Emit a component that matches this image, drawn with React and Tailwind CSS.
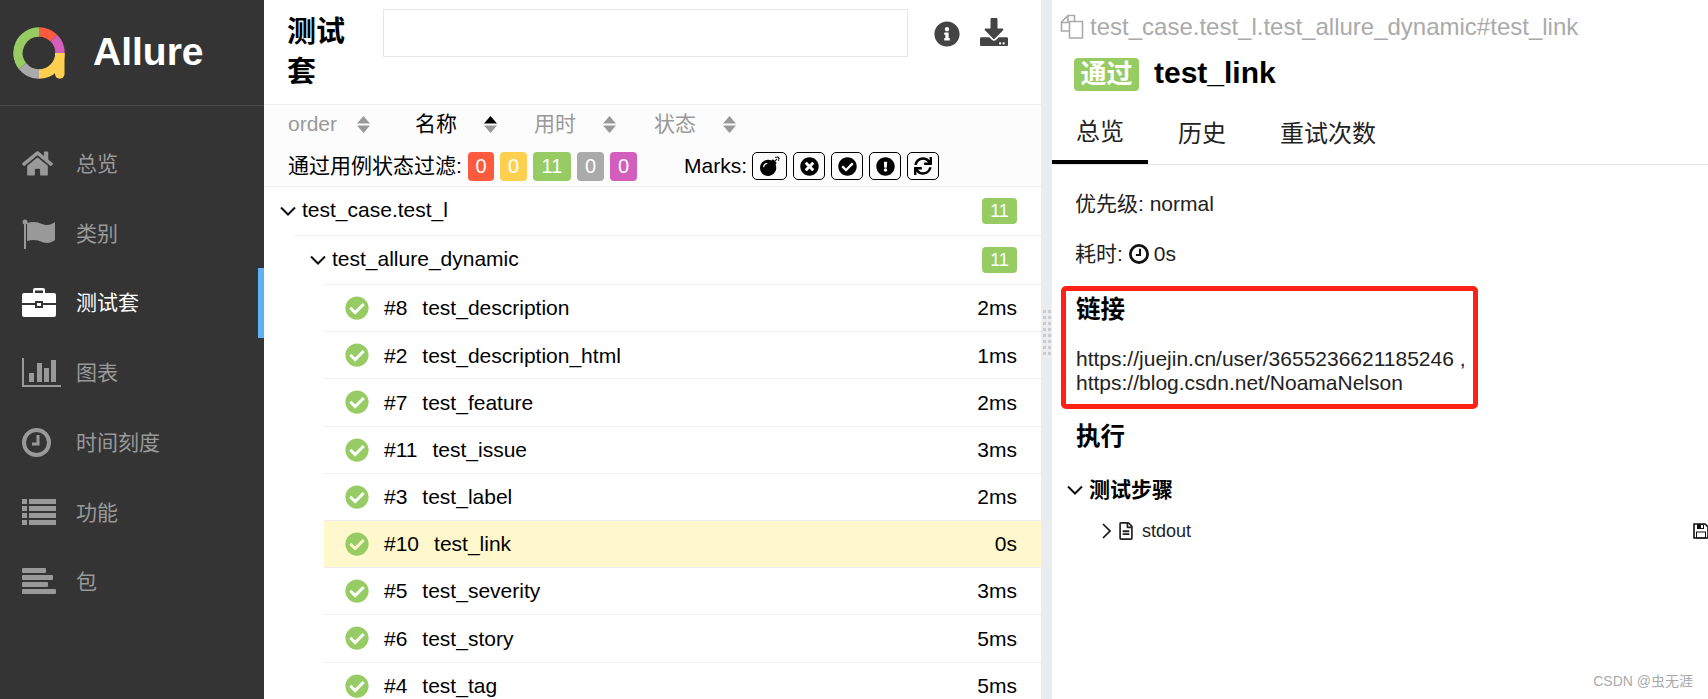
import React from "react";
import {
  FaHome,
  FaInfoCircle,
  FaDownload,
  FaBomb,
  FaTimesCircle,
  FaCheckCircle,
  FaExclamationCircle,
  FaSync,
  FaRegFileAlt,
} from "react-icons/fa";

const Logo = () => (
  <svg width="52" height="52" viewBox="0 0 52 52" fill="none" strokeWidth="9.5">
    <path d="M26 5 A21 21 0 0 1 40.85 11.15" stroke="#fd5a3e" />
    <path d="M40.85 11.15 A21 21 0 0 1 47 26" stroke="#d35ebe" />
    <path d="M47 26 A21 21 0 0 1 26 47" stroke="#ffd050" />
    <path d="M26 47 A21 21 0 0 1 9.5 39" stroke="#aaaaaa" />
    <path d="M9.5 39 A21 21 0 0 1 26 5" stroke="#97cc64" />
    <path d="M42 26 H51.5 V47 A4.7 4.7 0 0 1 42 47 Z" fill="#ffd050" stroke="none" />
  </svg>
);

const FlagIcon = () => (
  <svg width="34" height="30" viewBox="0 0 34 30" fill="#999999">
    <circle cx="3" cy="3" r="2.5" />
    <rect x="2" y="3" width="2" height="27" />
    <path d="M5 4 C11 2 16 3 20 5 C25 7 29 6 33 3 V21 C29 24 25 25 20 23 C16 21 11 20 5 22 Z" />
  </svg>
);

const BriefcaseIcon = () => (
  <svg width="34" height="30" viewBox="0 0 34 30" fill="#ffffff">
    <path d="M11 5 V2 A2 2 0 0 1 13 0 H21 A2 2 0 0 1 23 2 V5 H21 V2.5 H13 V5 Z" />
    <path d="M2 5 H32 A2 2 0 0 1 34 7 V15 H21 V13 H13 V15 H0 V7 A2 2 0 0 1 2 5 Z" />
    <path d="M0 17 H13 V20 H21 V17 H34 V27 A2 2 0 0 1 32 29 H2 A2 2 0 0 1 0 27 Z" />
    <rect x="15" y="15" width="4" height="3" />
  </svg>
);

const ChartIcon = () => (
  <svg width="39" height="29" viewBox="0 0 39 29" fill="#999999">
    <rect x="0" y="0" width="2" height="29" />
    <rect x="0" y="27" width="39" height="2" />
    <rect x="7" y="15" width="5" height="9" />
    <rect x="15" y="5" width="5" height="19" />
    <rect x="22" y="10" width="5" height="14" />
    <rect x="29" y="2" width="5" height="22" />
  </svg>
);

const ClockIcon = ({ size = 29, color = "#999999" }) => (
  <svg width={size} height={size} viewBox="0 0 29 29" fill="none" stroke={color}>
    <circle cx="14.5" cy="14.5" r="12.5" strokeWidth="4" />
    <path d="M16 7 V16 H10" strokeWidth="3" />
  </svg>
);

const ListIcon = () => (
  <svg width="34" height="27" viewBox="0 0 34 27" fill="#999999">
    <rect x="0" y="0" width="5" height="5" />
    <rect x="7" y="0" width="27" height="5" />
    <rect x="0" y="7" width="5" height="5" />
    <rect x="7" y="7" width="27" height="5" />
    <rect x="0" y="14" width="5" height="5" />
    <rect x="7" y="14" width="27" height="5" />
    <rect x="0" y="21" width="5" height="5" />
    <rect x="7" y="21" width="27" height="5" />
  </svg>
);

const AlignIcon = () => (
  <svg width="34" height="27" viewBox="0 0 34 27" fill="#999999">
    <rect x="0" y="0" width="24" height="5" rx="1" />
    <rect x="0" y="7" width="31" height="5" rx="1" />
    <rect x="0" y="14" width="26" height="5" rx="1" />
    <rect x="0" y="21" width="34" height="5" rx="1" />
  </svg>
);

const SortArrows = ({ active }) => (
  <svg width="13" height="17" viewBox="0 0 13 17">
    <path d="M6.5 0 L13 7.5 H0 Z" fill={active ? "#000000" : "#999999"} />
    <path d="M6.5 17 L13 9.5 H0 Z" fill="#999999" />
  </svg>
);

const AngleDown = () => (
  <svg width="16" height="10" viewBox="0 0 16 10" fill="none" stroke="#111111" strokeWidth="2">
    <path d="M1 1.5 L8 8.5 L15 1.5" />
  </svg>
);

const AngleRight = () => (
  <svg width="9" height="16" viewBox="0 0 9 16" fill="none" stroke="#111111" strokeWidth="1.6">
    <path d="M1 1 L8 8 L1 15" />
  </svg>
);

const FilesIcon = () => (
  <svg width="24" height="25" viewBox="0 0 24 25" fill="none" stroke="#aaaaaa" strokeWidth="1.6">
    <path d="M9 17 H1.5 V8 L8 1.5 H14.5 V7" />
    <path d="M9.5 7.5 H22.5 V24 H9.5 Z" />
    <path d="M8 2 V8.5 H2" />
  </svg>
);

const SaveIcon = () => (
  <svg width="16" height="16" viewBox="0 0 16 16" className="shrink-0 -mr-px">
    <path d="M1 1 H12 L15 4 V15 H1 Z" fill="none" stroke="#111111" strokeWidth="1.6" />
    <rect x="4" y="1" width="7" height="5" fill="#111111" />
    <rect x="8" y="2" width="2" height="3" fill="#ffffff" />
    <rect x="3.5" y="9" width="9" height="6" fill="none" stroke="#111111" />
  </svg>
);

const navItems = [
  { label: "总览", icon: <FaHome size={31} color="#999999" /> },
  { label: "类别", icon: <FlagIcon /> },
  { label: "测试套", icon: <BriefcaseIcon />, active: true },
  { label: "图表", icon: <ChartIcon /> },
  { label: "时间刻度", icon: <ClockIcon /> },
  { label: "功能", icon: <ListIcon /> },
  { label: "包", icon: <AlignIcon /> },
];

const sortItems = [
  { label: "order", width: "w-[127px]" },
  { label: "名称", width: "w-[119px]", active: true },
  { label: "用时", width: "w-[120px]" },
  { label: "状态", width: "w-[100px]" },
];

const testCases = [
  { id: "#8", name: "test_description", time: "2ms" },
  { id: "#2", name: "test_description_html", time: "1ms" },
  { id: "#7", name: "test_feature", time: "2ms" },
  { id: "#11", name: "test_issue", time: "3ms" },
  { id: "#3", name: "test_label", time: "2ms" },
  { id: "#10", name: "test_link", time: "0s", selected: true },
  { id: "#5", name: "test_severity", time: "3ms" },
  { id: "#6", name: "test_story", time: "5ms" },
  { id: "#4", name: "test_tag", time: "5ms" },
];

const Sidebar = () => (
  <div className="w-[264px] shrink-0 bg-[#343434] flex flex-col">
    <div className="h-[106px] shrink-0 border-b border-[#4a4a4a] flex items-center pl-[13px]">
      <Logo />
      <span className="ml-[28px] mb-[2px] text-white font-bold text-[39px] leading-none">Allure</span>
    </div>
    <div className="pt-[23px]">
      {navItems.map((item) => (
        <div
          key={item.label}
          className={`h-[69.7px] flex items-center border-r-[6px] ${
            item.active ? "border-[#5fb1f5] text-white" : "border-transparent text-[#999999]"
          }`}
        >
          <div className="w-[76px] pl-[22px] shrink-0 flex items-center">{item.icon}</div>
          <span className="text-[21px]">{item.label}</span>
        </div>
      ))}
    </div>
  </div>
);

const MarkButton = ({ children, width }) => (
  <div className={`h-[28px] ${width} border border-black rounded-[5px] flex items-center justify-center text-black`}>
    {children}
  </div>
);

const CountBadge = ({ value, color, width }) => (
  <div className={`h-[29px] ${width} ${color} rounded-[4px] text-white text-[20px] flex items-center justify-center`}>
    {value}
  </div>
);

const TestList = () => (
  <div className="w-[777px] shrink-0 flex flex-col">
    <div className="h-[105px] shrink-0 flex border-b border-[#eeeeee] pl-[23px]">
      <div className="w-[96px] shrink-0 pt-[12px]">
        <div className="w-[62px] font-bold text-[29px] leading-[40px] text-black">测试套</div>
      </div>
      <input className="mt-[9px] h-[48px] w-[525px] border border-[#e5e5e5] outline-none" />
      <FaInfoCircle size={26} color="#444444" className="ml-[26px] mt-[21px]" />
      <FaDownload size={28} color="#444444" className="ml-[20px] mt-[18px]" />
    </div>
    <div className="h-[82px] shrink-0 bg-[#fcfcfc] border-b border-[#eeeeee] pl-[24px]">
      <div className="h-[38px] flex items-center">
        {sortItems.map((item) => (
          <div
            key={item.label}
            className={`${item.width} flex items-center text-[21px] ${item.active ? "text-black" : "text-[#999999]"}`}
          >
            <span className="w-[69px]">{item.label}</span>
            <SortArrows active={item.active} />
          </div>
        ))}
      </div>
      <div className="h-[43px] pt-[3px] flex items-center text-[21px] text-black">
        <span className="w-[180px]">通过用例状态过滤:</span>
        <div className="flex gap-[6px]">
          <CountBadge value="0" color="bg-[#fd5a3e]" width="w-[26px]" />
          <CountBadge value="0" color="bg-[#ffd050]" width="w-[27px]" />
          <CountBadge value="11" color="bg-[#97cc64]" width="w-[38px]" />
          <CountBadge value="0" color="bg-[#aaaaaa]" width="w-[27px]" />
          <CountBadge value="0" color="bg-[#d35ebe]" width="w-[27px]" />
        </div>
        <span className="ml-[47px] mr-[5px]">Marks:</span>
        <div className="flex gap-[6px]">
          <MarkButton width="w-[35px]"><FaBomb size={20} /></MarkButton>
          <MarkButton width="w-[32px]"><FaTimesCircle size={19} /></MarkButton>
          <MarkButton width="w-[32px]"><FaCheckCircle size={19} /></MarkButton>
          <MarkButton width="w-[32px]"><FaExclamationCircle size={19} /></MarkButton>
          <MarkButton width="w-[32px]"><FaSync size={18} /></MarkButton>
        </div>
      </div>
    </div>
    <div className="flex flex-col text-[21px] text-black">
      <div className="ml-[30px] h-[49px] shrink-0 border-b border-[#eeeeee] flex items-center pr-[24px]">
        <div className="-ml-[14px] w-[22px] shrink-0"><AngleDown /></div>
        <span className="flex-1 -mt-[2px]">test_case.test_l</span>
        <span className="w-[35px] h-[26px] bg-[#97cc64] rounded-[4px] text-white text-[18px] flex items-center justify-center">11</span>
      </div>
      <div className="ml-[60px] h-[49px] shrink-0 border-b border-[#eeeeee] flex items-center pr-[24px]">
        <div className="-ml-[14px] w-[22px] shrink-0"><AngleDown /></div>
        <span className="flex-1 -mt-[2px]">test_allure_dynamic</span>
        <span className="w-[35px] h-[26px] bg-[#97cc64] rounded-[4px] text-white text-[18px] flex items-center justify-center">11</span>
      </div>
      {testCases.map((item) => (
        <div
          key={item.id}
          className={`ml-[60px] h-[47.2px] shrink-0 border-b border-[#eeeeee] flex items-center pl-[21px] pr-[24px] ${
            item.selected ? "bg-[#fff8cc]" : ""
          }`}
        >
          <FaCheckCircle size={24} color="#97cc64" className="shrink-0" />
          <span className="ml-[15px]">{item.id}</span>
          <span className="ml-[15px] flex-1">{item.name}</span>
          <span>{item.time}</span>
        </div>
      ))}
    </div>
  </div>
);

const Divider = () => (
  <div className="w-[11px] shrink-0 bg-[#e9edf0] flex items-center justify-center pb-[245px]">
    <div className="grid grid-cols-2 gap-x-[2px] gap-y-[3px] mt-[210px]">
      {Array.from({ length: 16 }).map((_, i) => (
        <div key={i} className="w-[3px] h-[3px] bg-[#cccccc]" />
      ))}
    </div>
  </div>
);

const DetailPane = () => (
  <div className="flex-1 relative flex flex-col text-black overflow-hidden">
    <div className="h-[50px] shrink-0 flex items-start pl-[8px] pt-[14px] text-[24px] text-[#aaaaaa]">
      <FilesIcon />
      <span className="ml-[6px] leading-[26px]">test_case.test_l.test_allure_dynamic#test_link</span>
    </div>
    <div className="h-[41px] shrink-0 flex items-start pl-[22px] pt-[8px]">
      <span className="w-[65px] h-[33px] bg-[#97cc64] rounded-[4px] text-white font-bold text-[26px] flex items-center justify-center">通过</span>
      <span className="ml-[15px] font-bold text-[30px] leading-[30px]">test_link</span>
    </div>
    <div className="h-[74px] shrink-0 flex border-b border-[#e5e5e5] text-[24px] text-[#222222]">
      <div className="w-[96px] mt-[8px] h-[65px] pl-[24px] pt-[4px] flex items-center border-b-4 border-black -mb-px">总览</div>
      <div className="ml-[30px] mt-[8px] h-[65px] pt-[4px] flex items-center">历史</div>
      <div className="ml-[54px] mt-[8px] h-[65px] pt-[4px] flex items-center">重试次数</div>
    </div>
    <div className="pl-[23px] text-[21px] text-[#222222]">
      <div className="h-[64px] pt-[27px] leading-[24px]">优先级: normal</div>
      <div className="h-[50px] flex items-center">
        耗时:
        <span className="ml-[6px] mr-[5px]"><ClockIcon size={20} color="#111111" /></span>
        0s
      </div>
    </div>
    <div className="pl-[24px] pt-[16px]">
      <h3 className="font-bold text-[24.5px] leading-[30px]">链接</h3>
      <div className="mt-[22px] text-[21px] leading-[23.5px] text-[#222222]">
        https://juejin.cn/user/3655236621185246 ,<br />https://blog.csdn.net/NoamaNelson
      </div>
      <h3 className="mt-[28px] font-bold text-[24.5px] leading-[30px]">执行</h3>
    </div>
    <div className="mt-[26px] pl-[15px] h-[24px] flex items-center font-bold text-[21px]">
      <AngleDown />
      <span className="ml-[6px]">测试步骤</span>
    </div>
    <div className="mt-[17px] pl-[50px] h-[24px] flex items-center text-[18px] text-[#222222]">
      <AngleRight />
      <span className="ml-[6px]"><FaRegFileAlt size={18} /></span>
      <span className="ml-[7px] flex-1">stdout</span>
      <SaveIcon />
    </div>
    <div className="absolute left-[9px] top-[286px] w-[417px] h-[123px] border-[5px] border-[#ff2116] rounded-[5px]" />
    <div className="absolute right-[15px] top-[673px] text-[14px] leading-[17px] text-[#aaaaaa]">CSDN @虫无涯</div>
  </div>
);

const App = () => {
  return (
    <div className="w-[1708px] h-[699px] overflow-hidden flex bg-white font-['Liberation_Sans','Noto_Sans_CJK_SC',sans-serif]">
      <Sidebar />
      <TestList />
      <Divider />
      <DetailPane />
    </div>
  );
};

export default App;
